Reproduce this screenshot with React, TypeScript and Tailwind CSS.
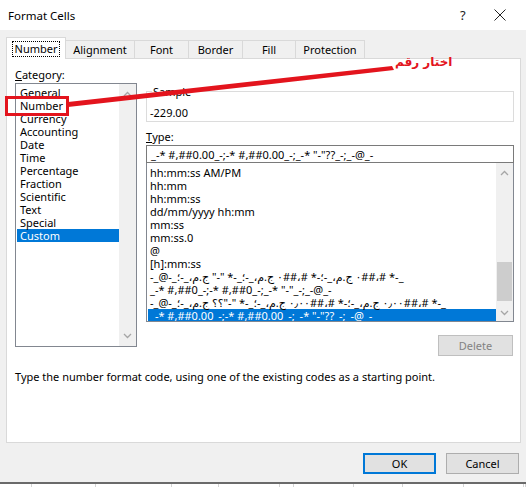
import React from 'react';

const categories = [
  'General',
  'Number',
  'Currency',
  'Accounting',
  'Date',
  'Time',
  'Percentage',
  'Fraction',
  'Scientific',
  'Text',
  'Special',
  'Custom',
];

const formats = [
  'hh:mm:ss AM/PM',
  'hh:mm',
  'hh:mm:ss',
  'dd/mm/yyyy hh:mm',
  'mm:ss',
  'mm:ss.0',
  '@',
  '[h]:mm:ss',
  '-_@-_؛-_،م.ج "-" *-_؛-_،م.ج ٠##،# *-؛-_،م.ج ٠##،# *-_',
  '_-* #,##0_-;-* #,##0_-;_-* "-"_-;_-@_-',
  '-_@-_؛-_،م.ج ؟؟"-" *-_؛-_،م.ج ٠٫٠٠##،# *-؛-_،م.ج ٠٫٠٠##،# *-_',
  '_-* #,##0.00_-;-* #,##0.00_-;_-* "-"??_-;_-@_-',
];

const tabs = ['Alignment', 'Font', 'Border', 'Fill', 'Protection'];
const tabWidths = ['w-[69px]', 'w-[54px]', 'w-[54px]', 'w-[53px]', 'w-[69px]'];

const Chevron: React.FC<{ up?: boolean }> = ({ up }) => (
  <svg width="9" height="6" viewBox="0 0 9 6">
    <polyline
      points={up ? '1,5 4.5,1.5 8,5' : '1,1 4.5,4.5 8,1'}
      fill="none"
      stroke="#a6a6a6"
      strokeWidth="1.3"
    />
  </svg>
);

const FONT = { fontFamily: '"Noto Sans", "DejaVu Sans", sans-serif' };

export default function App() {
  return (
    <div
      className="relative w-[526px] h-[487px] overflow-hidden bg-[#f0f0f0] text-[11px] leading-[13px] text-black"
      style={FONT}
    >
      {/* title bar */}
      <div className="h-[30px] bg-white flex items-center pl-[8px]">
        <span className="flex-1 text-[11.5px]">Format Cells</span>
        <span className="w-[14px] text-[13px] text-[#222]">?</span>
        <div className="w-[52px] flex justify-center">
          <svg width="12" height="12" viewBox="0 0 12 12">
            <path d="M0.5 0.5 L11.5 11.5 M11.5 0.5 L0.5 11.5" stroke="#222" strokeWidth="1" />
          </svg>
        </div>
      </div>

      {/* tabs */}
      <div className="flex items-end h-[28px] pl-[6px]">
        <div className="w-[60px] h-[22px] bg-white border border-[#d9d9d9] border-b-0 flex items-center justify-center -mb-px relative z-10">
          <span className="border border-dotted border-black px-[2px] leading-[14px]">Number</span>
        </div>
        {tabs.map((t, i) => (
          <div
            key={t}
            className={`${tabWidths[i]} h-[18px] border border-[#d9d9d9] border-l-0 border-b-0 flex items-center justify-center`}
          >
            {t}
          </div>
        ))}
      </div>

      {/* panel */}
      <div className="ml-[6px] w-[515px] h-[385px] bg-white border border-[#d9d9d9] flex flex-col">
        <div className="flex pl-[8px]">
          {/* category column */}
          <div className="w-[122px] pt-[9px] flex flex-col">
            <div className="h-[15px]">
              <span className="underline">C</span>ategory:
            </div>
            <div className="h-[264px] border border-[#828790] flex">
              <div className="flex-1 pt-[2px] pl-px">
                {categories.map((c) => (
                  <div
                    key={c}
                    className={`h-[13px] pl-[3px] ${c === 'Custom' ? 'bg-[#0078d7] text-white' : ''}`}
                  >
                    {c}
                  </div>
                ))}
              </div>
              <div className="w-[17px] bg-[#f0f0f0] flex flex-col items-center justify-between py-[7px]">
                <Chevron up />
                <Chevron />
              </div>
            </div>
          </div>

          {/* right column */}
          <div className="ml-[9px] w-[368px] flex flex-col">
            <div className="pt-[32px]">
              <div className="relative h-[31px] border border-[#dcdcdc] pl-[3px] pt-[14px]">
                <span className="absolute left-[5px] -top-[7px] bg-white px-px">Sample</span>
                -229.00
              </div>
            </div>
            <div className="mt-[6px] h-[17px] flex items-center">
              <span className="underline">T</span>ype:
            </div>
            <div className="h-[18px] border border-[#7a7a7a] pl-[4px] flex items-center">
              _-* #,##0.00_-;-* #,##0.00_-;_-* "-"??_-;_-@_-
            </div>
            <div className="h-[159px] border border-[#828790] border-t-0 flex">
              <div className="flex-1 pt-[3px] pl-px overflow-hidden">
                {formats.map((f, i) => (
                  <div
                    key={i}
                    dir="ltr"
                    className={`h-[13px] pl-[2px] whitespace-nowrap [unicode-bidi:bidi-override] ${
                      i === formats.length - 1 ? 'bg-[#0078d7] text-white' : ''
                    }`}
                  >
                    {f}
                  </div>
                ))}
              </div>
              <div className="w-[17px] bg-[#f0f0f0] flex flex-col items-center pt-[7px] pb-[5px]">
                <Chevron up />
                <div className="flex-1" />
                <div className="w-[15px] h-[39px] bg-[#cdcdcd] mb-[9px]" />
                <Chevron />
              </div>
            </div>
            <div className="flex justify-end mt-[13px] mr-px">
              <div className="w-[75px] h-[21px] bg-[#e1e1e1] border border-[#bfbfbf] text-[#838383] flex items-center justify-center">
                Delete
              </div>
            </div>
          </div>
        </div>
        <div className="pl-[8px] mt-[14px]">
          Type the number format code, using one of the existing codes as a starting point.
        </div>
      </div>

      {/* buttons */}
      <div className="flex justify-end gap-[10px] pr-[7px] mt-[10px]">
        <div className="w-[73px] h-[21px] bg-[#e1e1e1] border-2 border-[#0078d7] flex items-center justify-center">
          OK
        </div>
        <div className="w-[73px] h-[21px] bg-[#e1e1e1] border border-[#adadad] flex items-center justify-center">
          Cancel
        </div>
      </div>

      {/* sheet strip behind */}
      <div className="mt-[8px] h-[10px] bg-white border-t-2 border-[#6a6a6a] flex">
        {[33, 66, 79, 49, 63, 15, 62, 51, 63, 62, 2].map((w, i) => (
          <div key={i} style={{ width: w }} className="h-full border-r border-[#d4d4d4]" />
        ))}
      </div>

      {/* red annotation */}
      <div className="absolute left-[5px] top-[96px] w-[64px] h-[20px] border-[3px] border-[#e3141d]" />
      <svg className="absolute left-0 top-0" width="526" height="487">
        <polygon points="68,102 392,66 394,70 68,107" fill="#e3141d" />
      </svg>
      <div
        className="absolute left-[395px] top-[54px] text-[12px] font-bold text-[#e3141d] leading-[17px]"
        dir="rtl"
        style={{ fontFamily: '"DejaVu Sans", sans-serif' }}
      >
        اختار رقم
      </div>
    </div>
  );
}
